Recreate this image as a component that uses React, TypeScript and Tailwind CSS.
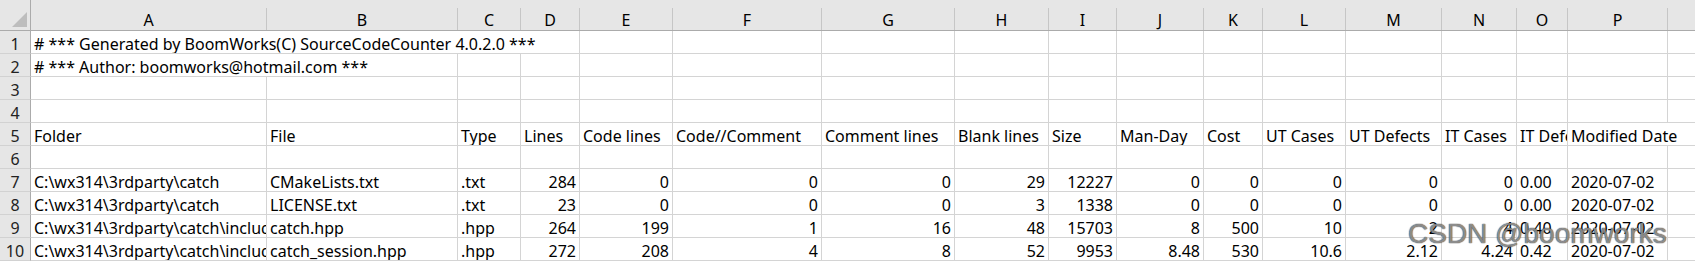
import clsx from "clsx";

type Cell = { t?: string; r?: boolean; span?: 2 | 4 };

const LETTERS = ["A", "B", "C", "D", "E", "F", "G", "H", "I", "J", "K", "L", "M", "N", "O", "P", ""];

const empty = (n: number): Cell[] => Array.from({ length: n }, () => ({}));

const dataRow = (
  folder: string,
  file: string,
  type: string,
  nums: string[],
  itDefects: string,
  date: string
): Cell[] => [
  { t: folder },
  { t: file },
  { t: type },
  ...nums.map((n) => ({ t: n, r: true })),
  { t: itDefects },
  { t: date },
  {},
];

const ROWS: Cell[][] = [
  [{ t: "# *** Generated by BoomWorks(C) SourceCodeCounter 4.0.2.0 ***", span: 4 }, ...empty(13)],
  [{ t: "# *** Author: boomworks@hotmail.com ***", span: 2 }, ...empty(15)],
  empty(17),
  empty(17),
  [
    ...[
      "Folder",
      "File",
      "Type",
      "Lines",
      "Code lines",
      "Code//Comment",
      "Comment lines",
      "Blank lines",
      "Size",
      "Man-Day",
      "Cost",
      "UT Cases",
      "UT Defects",
      "IT Cases",
      "IT Defects",
    ].map((t) => ({ t })),
    // runs on into the empty column after it
    { t: "Modified Date", span: 2 },
  ],
  empty(17),
  dataRow(
    "C:\\wx314\\3rdparty\\catch",
    "CMakeLists.txt",
    ".txt",
    ["284", "0", "0", "0", "29", "12227", "0", "0", "0", "0", "0"],
    "0.00",
    "2020-07-02"
  ),
  dataRow(
    "C:\\wx314\\3rdparty\\catch",
    "LICENSE.txt",
    ".txt",
    ["23", "0", "0", "0", "3", "1338", "0", "0", "0", "0", "0"],
    "0.00",
    "2020-07-02"
  ),
  dataRow(
    "C:\\wx314\\3rdparty\\catch\\include",
    "catch.hpp",
    ".hpp",
    ["264", "199", "1", "16", "48", "15703", "8", "500", "10", "2", "4"],
    "0.40",
    "2020-07-02"
  ),
  dataRow(
    "C:\\wx314\\3rdparty\\catch\\include",
    "catch_session.hpp",
    ".hpp",
    ["272", "208", "4", "8", "52", "9953", "8.48", "530", "10.6", "2.12", "4.24"],
    "0.42",
    "2020-07-02"
  ),
];

function HeaderRow() {
  return (
    <>
      <div className="h-[31px] bg-[#e6e6e6] border-r border-b border-[#ababab] flex items-end justify-end pr-[3px] pb-[3px]">
        <svg width="15" height="15" viewBox="0 0 15 15">
          <polygon points="15,0 15,15 0,15" fill="#bdbdbd" />
        </svg>
      </div>
      {LETTERS.map((l, i) => (
        <div key={i} className="h-[31px] bg-[#e6e6e6] border-b border-[#ababab] pt-2 flex">
          <div
            className={clsx(
              "flex-1 flex items-end justify-center pb-[2px] leading-4",
              l && "border-r border-[#c6c6c6]"
            )}
          >
            {l}
          </div>
        </div>
      ))}
    </>
  );
}

export default function App() {
  return (
    <div className="relative w-[1695px] h-[265px] bg-white overflow-hidden font-['Noto_Sans',sans-serif] text-[16px] text-black">
      <div className="grid grid-cols-[31px_236px_191px_63px_59px_93px_149px_133px_94px_68px_87px_59px_83px_96px_75px_51px_100px_1fr]">
        <HeaderRow />
        {ROWS.map((row, ri) => (
          <div key={ri} className="contents">
            <div className="h-[23px] bg-[#e6e6e6] border-r border-r-[#ababab] border-b border-b-[#d2d2d2] flex items-end justify-center pb-px leading-4 text-[#222]">
              {ri + 1}
            </div>
            {row.map((c, ci) => (
              <div
                key={ci}
                className={clsx(
                  "h-[23px] border-b border-r border-[#d4d4d4] flex items-end pb-px overflow-hidden whitespace-nowrap leading-4",
                  c.r ? "justify-end pr-[3px]" : "pl-[3px]",
                  c.span === 4 && "col-span-4",
                  c.span === 2 && "col-span-2",
                  ci === row.length - 1 && "border-r-0"
                )}
              >
                {c.t}
              </div>
            ))}
          </div>
        ))}
      </div>

      {/* blog watermark stamped over the lower right corner */}
      <div className="absolute left-[1408px] top-[220px] font-['Liberation_Sans',sans-serif] text-[28px] leading-[28px] text-white/50 [text-shadow:0_0_1px_rgba(0,0,0,0.75),0_0_1px_rgba(0,0,0,0.75)] whitespace-nowrap">
        CSDN @boomworks
      </div>
    </div>
  );
}
